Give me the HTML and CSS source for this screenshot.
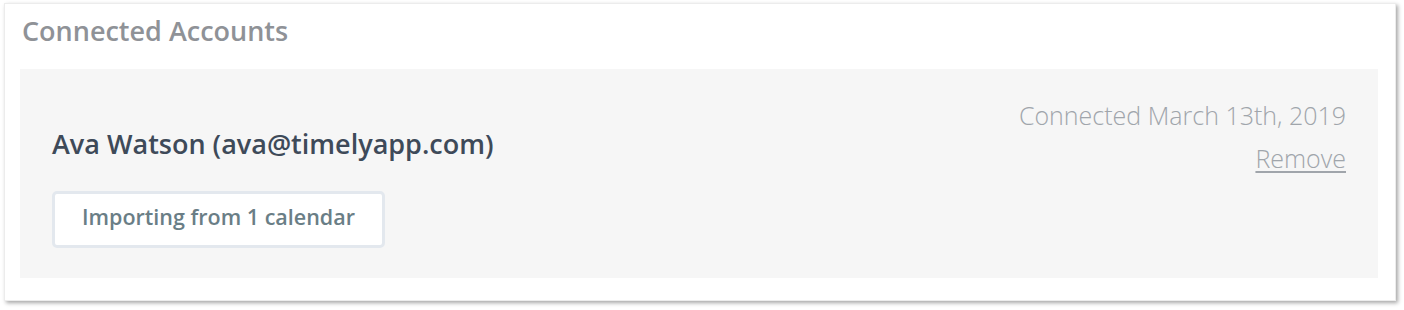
FILE: index.html
```html
<!DOCTYPE html>
<html lang="en">
<head>
    <meta charset="UTF-8">
    <meta name="viewport" content="width=device-width, initial-scale=1.0">
    <title>Connected Accounts</title>
    <link rel="stylesheet" href="styles.css">
</head>
<body>
    <div class="card">
        <h2 class="card-title">Connected Accounts</h2>
        <div class="account">
            <div class="account-info">
                <div class="account-name">Ava Watson (ava@timelyapp.com)</div>
                <button class="import-btn" type="button">Importing from 1 calendar</button>
            </div>
            <div class="account-meta">
                <div class="connected-date">Connected March 13th, 2019</div>
                <a class="remove-link" href="#">Remove</a>
            </div>
        </div>
    </div>
</body>
</html>
```

FILE: styles.css
```css
body {
    margin: 0;
    padding: 3px 8px 8px 4px;
    background-color: #fff;
    font-family: "Open Sans", Lato, sans-serif;
}

.card {
    width: 1392px;
    height: 298px;
    box-sizing: border-box;
    padding: 12px 17px 0 15px;
    background-color: #fff;
    border: 1px solid #ececec;
    box-shadow: 2px 2px 4px rgba(0, 0, 0, 0.35);
}

.card-title {
    margin: 0 0 23px 2px;
    font-size: 27px;
    line-height: 30px;
    font-weight: 600;
    color: #8f9297;
}

.account {
    display: flex;
    justify-content: space-between;
    align-items: flex-start;
    height: 209px;
    box-sizing: border-box;
    padding: 31px 32px 0 32px;
    background-color: #f6f6f6;
}

.account-info {
    padding-top: 27px;
}

.account-name {
    font-size: 27px;
    line-height: 34px;
    font-weight: 600;
    color: #3e4a59;
}

.import-btn {
    display: block;
    margin-top: 30px;
    width: 333px;
    height: 57px;
    padding: 0 0 6px;
    background-color: #fff;
    border: 3px solid #e3e8ee;
    border-radius: 5px;
    font-family: inherit;
    font-size: 21.5px;
    font-weight: 600;
    color: #6a7e86;
    cursor: pointer;
}

.account-meta {
    display: flex;
    flex-direction: column;
    align-items: flex-end;
}

.connected-date {
    font-size: 25px;
    line-height: 30px;
    font-weight: 300;
    color: #a0a5ab;
}

.remove-link {
    margin-top: 13px;
    font-size: 25px;
    line-height: 30px;
    font-weight: 300;
    color: #a0a5ab;
    text-decoration: underline;
    text-decoration-thickness: 1.5px;
    text-underline-offset: 3px;
}
```
